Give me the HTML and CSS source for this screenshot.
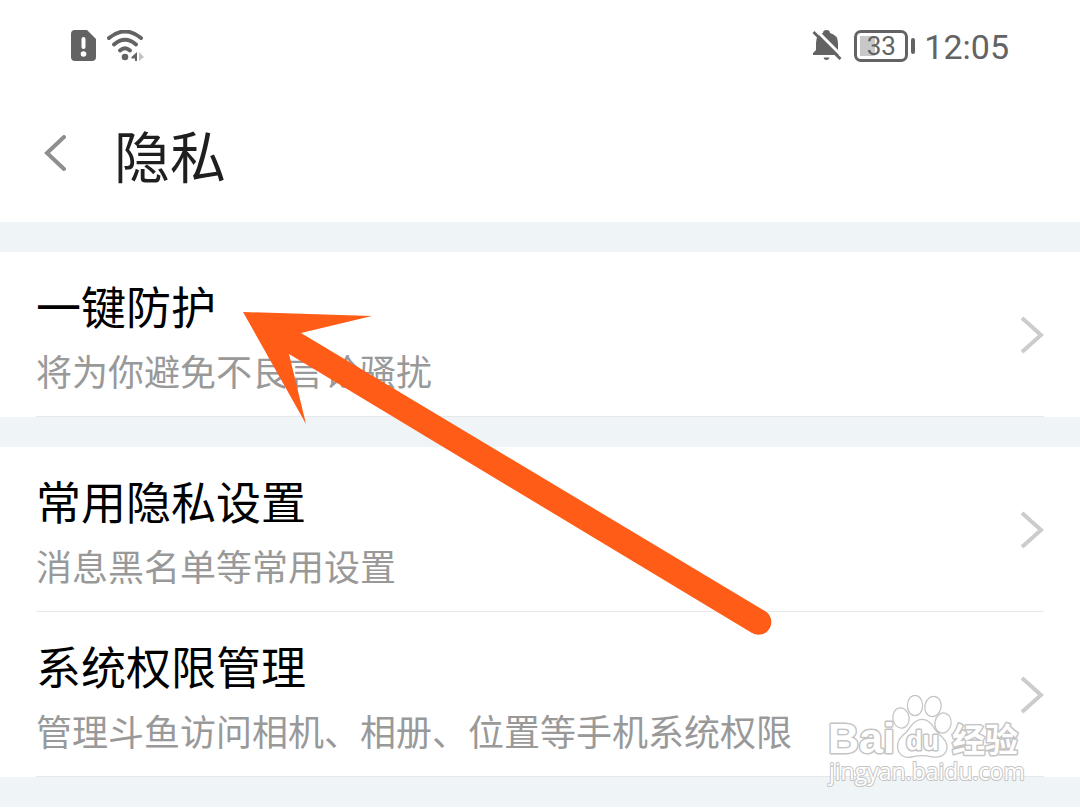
FILE: index.html
```html
<!DOCTYPE html>
<html lang="zh-CN">
<head>
  <meta charset="UTF-8" />
  <meta name="viewport" content="width=device-width, initial-scale=1" />
  <title>隐私</title>
  <link rel="stylesheet" href="styles.css">
</head>
<body>
  <div class="screen">
    <div class="status-bar">
      <div class="status-group">
        <svg width="26" height="32" viewBox="0 0 26 32" aria-hidden="true">
          <path fill="#636363" d="M4 0H16L25 9V27Q25 31 21 31H4Q0 31 0 27V4Q0 0 4 0Z"/>
          <path stroke="#fff" stroke-width="4" stroke-linecap="round" d="M12.500 9V17"/>
          <circle cx="12.500" cy="24" r="2.800" fill="#fff"/>
        </svg>
        <svg width="38" height="32" viewBox="0 0 38 32" aria-hidden="true">
          <g fill="none" stroke="#636363" stroke-width="4" stroke-linecap="round">
            <path d="M2 8Q18 -5 34 8"/>
            <path d="M7 14.500Q18 5 29 14.500"/>
            <path d="M13 20.500Q18 16 23 20.500"/>
          </g>
          <circle cx="18" cy="27" r="3.300" fill="#636363"/>
          <path fill="#636363" d="M30 22V31H28V28.500H24.500V27Z"/>
          <path fill="#c4c4c4" d="M32 22L37 27L32 31Z"/>
        </svg>
      </div>
      <div class="status-group">
        <svg width="30" height="32" viewBox="0 0 30 32" aria-hidden="true">
          <path fill="#636363" d="M1 25V23L4 20V13Q4 5 11 3Q11 0 14.500 0Q18 0 18 3Q26 5 26 13V20L28 23V25Z"/>
          <path fill="#636363" d="M11.500 27.500H17.500Q17 30 14.500 30Q12 30 11.500 27.500Z"/>
          <path stroke="#fff" stroke-width="3" d="M4 0L30 26"/>
          <path stroke="#636363" stroke-width="2.800" d="M1.500 2L28.500 29"/>
        </svg>
        <div class="battery"><span class="battery-level">33</span></div>
        <time class="clock">12:05</time>
      </div>
    </div>

    <header class="header">
      <button class="back" type="button" aria-label="返回">
        <svg width="24" height="38" viewBox="0 0 24 38" aria-hidden="true">
          <path d="M20 2L3 18L20 34"/>
        </svg>
      </button>
      <h1>隐私</h1>
    </header>

    <main class="settings">
      <section class="group">
        <a class="row" href="#">
          <div class="row-text">
            <h2>一键防护</h2>
            <p>将为你避免不良言论骚扰</p>
          </div>
          <svg class="chevron" width="24" height="38" viewBox="0 0 24 38" aria-hidden="true"><path d="M2 2L21 19L2 36"/></svg>
        </a>
      </section>

      <section class="group">
        <a class="row" href="#">
          <div class="row-text">
            <h2>常用隐私设置</h2>
            <p>消息黑名单等常用设置</p>
          </div>
          <svg class="chevron" width="24" height="38" viewBox="0 0 24 38" aria-hidden="true"><path d="M2 2L21 19L2 36"/></svg>
        </a>
        <a class="row" href="#">
          <div class="row-text">
            <h2>系统权限管理</h2>
            <p>管理斗鱼访问相机、相册、位置等手机系统权限</p>
          </div>
          <svg class="chevron" width="24" height="38" viewBox="0 0 24 38" aria-hidden="true"><path d="M2 2L21 19L2 36"/></svg>
        </a>
      </section>
    </main>

    <!-- pointer to the first setting -->
    <svg class="arrow" width="530" height="324" viewBox="0 0 530 324" aria-hidden="true">
      <path fill="#ff5c18" d="M0 0L129 4L58 21L522 299A12.500 12.500 0 0 1 509 321L46 42L63 112Z"/>
    </svg>

    <!-- watermark -->
    <svg class="watermark" width="200" height="94" viewBox="0 0 200 94">
      <g class="mark">
        <text class="mark-bai" x="1" y="58">Bai</text>
        <ellipse cx="74" cy="23" rx="7.500" ry="9.500" transform="rotate(-8 74 23)"/>
        <ellipse cx="88" cy="10.500" rx="7" ry="9.500"/>
        <ellipse cx="106" cy="11.500" rx="7.500" ry="9.500" transform="rotate(12 106 11.500)"/>
        <ellipse cx="116" cy="28" rx="7.500" ry="9.500" transform="rotate(10 116 28)"/>
        <path d="M95 25Q102 25 107 34Q110 38 115 43Q122 50 118 57Q114 63 104 61Q95 59 86 61Q76 64 72 56Q69 48 76 41Q81 37 84 32Q89 25 95 25Z"/>
        <text class="mark-du" x="79" y="55">du</text>
        <text class="mark-cjk" x="125" y="57">经验</text>
        <text class="mark-url" x="2" y="85">jingyan.baidu.com</text>
      </g>
    </svg>
  </div>
</body>
</html>
```

FILE: styles.css
```css
* {
  box-sizing: border-box;
}
body {
  margin: 0;
  background: #fff;
  color: #000;
  font-family: "Noto Sans CJK SC", sans-serif;
}
h1, h2, p {
  margin: 0;
  font-weight: 400;
}
.screen {
  position: relative;
}

/* status bar */
.status-bar {
  display: flex;
  justify-content: space-between;
  align-items: center;
  height: 92px;
  padding: 0 71px;
  color: #636363;
}
.status-group {
  display: flex;
  align-items: center;
  gap: 12px;
}
.status-group:first-child {
  gap: 10px;
}
.battery {
  position: relative;
  width: 54px;
  height: 32px;
  margin-right: 4px;
  border: 3px solid #636363;
  border-radius: 7px;
  background: linear-gradient(#c8c8c8, #c8c8c8) 3px 3px / 15px 20px no-repeat;
}
.battery::after {
  content: "";
  position: absolute;
  top: 5px;
  right: -10px;
  width: 4px;
  height: 16px;
  border-radius: 2px;
  background: #636363;
}
.battery-level {
  display: block;
  font: 400 26px/26px Roboto, sans-serif;
  text-align: center;
}
.clock {
  padding-top: 2px;
  font: 400 34px/40px Roboto, sans-serif;
}

/* title */
.header {
  display: flex;
  align-items: center;
  gap: 40px;
  height: 130px;
  padding: 0 36px 6px;
}
.header h1 {
  color: #1f1f1f;
  font-size: 56px;
  line-height: 72px;
}
.back {
  display: flex;
  padding: 0 6px 0 8px;
  border: none;
  background: none;
  cursor: pointer;
}
.back path {
  fill: none;
  stroke: #8e8e8e;
  stroke-width: 4;
  stroke-linecap: round;
}

/* list */
.settings {
  display: grid;
  gap: 30px;
  padding: 30px 0;
  background: #eff4f7;
}
.group {
  padding: 0 36px;
  background: #fff;
}
.row {
  display: flex;
  justify-content: space-between;
  align-items: center;
  padding: 22px 0 20px;
  border-bottom: 1px solid #e6e8e9;
  color: inherit;
  text-decoration: none;
}
.row-text {
  display: grid;
  gap: 6px;
}
.row h2 {
  font-size: 45px;
  line-height: 64px;
}
.row p {
  color: #999;
  font-size: 36px;
  line-height: 52px;
}
.chevron path {
  fill: none;
  stroke: #ccc;
  stroke-width: 4;
}

/* overlays */
.arrow {
  position: absolute;
  top: 312px;
  left: 243px;
  pointer-events: none;
}
.watermark {
  position: absolute;
  right: 53px;
  bottom: 18px;
  pointer-events: none;
}
.mark {
  fill: #fff;
  stroke: #c4c4c4;
  stroke-width: 3;
  stroke-linejoin: round;
  paint-order: stroke;
}
.mark ellipse, .mark path {
  stroke-width: 2.500;
}
.mark-bai {
  font: 700 43px "Liberation Sans", sans-serif;
}
.mark-du {
  font: 700 27px "Liberation Sans", sans-serif;
}
.mark-cjk {
  font: 700 33px "Noto Sans CJK SC", sans-serif;
}
.mark-url {
  font: 400 23px "Open Sans", sans-serif;
  stroke-width: 2;
}
```
